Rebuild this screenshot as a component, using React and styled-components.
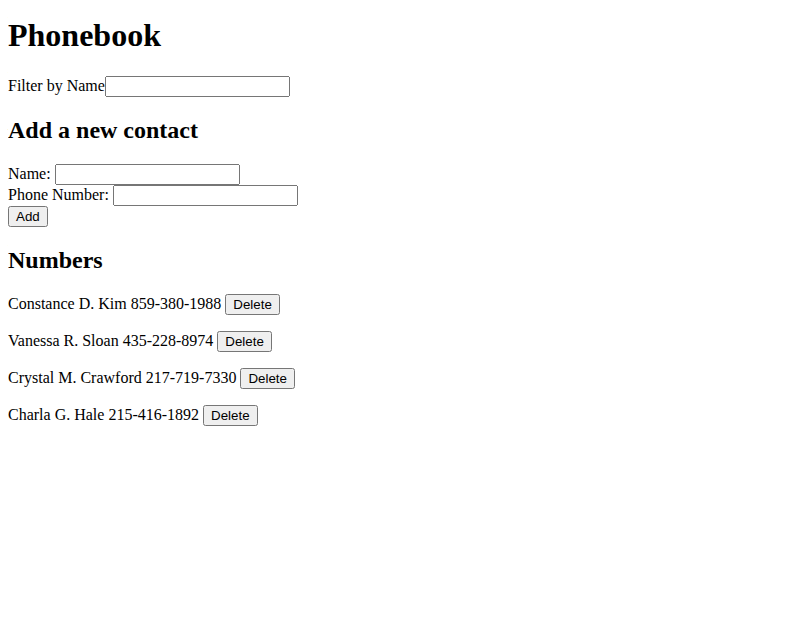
import React, { useState } from "react";
import styled, { createGlobalStyle } from "styled-components";

const GlobalStyle = createGlobalStyle`
  body {
    margin: 8px;
    font-family: "Liberation Serif", "Times New Roman", serif;
    font-size: 16px;
    color: #000;
    background: #fff;
  }
`;

const Title = styled.h1`
  font-size: 32px;
  margin: 9.44px 0 21.44px;
`;

const SubTitle = styled.h2`
  font-size: 24px;
  margin: 19.92px 0;
`;

const TextInput = styled.input`
  font-family: "Liberation Sans", Arial, sans-serif;
  font-size: 13.33px;
`;

const Button = styled.button`
  font-family: "Liberation Sans", Arial, sans-serif;
  font-size: 13.33px;
`;

const Row = styled.div``;

const Person = styled.p`
  margin: 16px 0;
`;

const initialPersons = [
  { id: 1, name: "Constance D. Kim", number: "859-380-1988" },
  { id: 2, name: "Vanessa R. Sloan", number: "435-228-8974" },
  { id: 3, name: "Crystal M. Crawford", number: "217-719-7330" },
  { id: 4, name: "Charla G. Hale", number: "215-416-1892" },
];

export default function App() {
  const [persons] = useState(initialPersons);
  return (
    <>
      <GlobalStyle />
      <Title>Phonebook</Title>
      <Row>
        Filter by Name<TextInput />
      </Row>
      <SubTitle>Add a new contact</SubTitle>
      <form onSubmit={(e) => e.preventDefault()}>
        <Row>
          Name: <TextInput />
        </Row>
        <Row>
          Phone Number: <TextInput />
        </Row>
        <Row>
          <Button type="submit">Add</Button>
        </Row>
      </form>
      <SubTitle>Numbers</SubTitle>
      {persons.map((p) => (
        <Person key={p.id}>
          {p.name} {p.number} <Button>Delete</Button>
        </Person>
      ))}
    </>
  );
}
